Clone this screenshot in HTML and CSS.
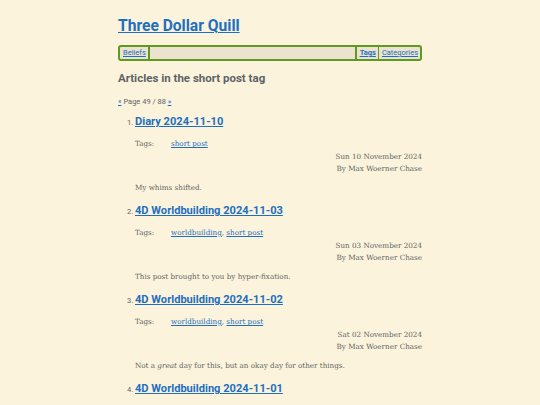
FILE: index.html
```html
<!DOCTYPE html>
<html lang="en">
<head>
<meta charset="utf-8">
<title>Three Dollar Quill</title>
<link rel="stylesheet" href="styles.css">
</head>
<body>
<div class="page">
  <header class="site-header">
    <h1 class="site-title"><a href="#">Three Dollar Quill</a></h1>
    <nav class="nav">
      <a href="#" class="nav-link">Beliefs</a>
      <span class="nav-fill"></span>
      <a href="#" class="nav-link nav-current">Tags</a>
      <a href="#" class="nav-link">Categories</a>
    </nav>
  </header>
  <main>
    <h2 class="section-title">Articles in the short post tag</h2>
    <p class="pager"><a href="#">«</a> Page 49 / 88 <a href="#">»</a></p>
    <ol class="articles" start="1">
      <li class="article">
        <h3 class="article-title"><a href="#">Diary 2024-11-10</a></h3>
        <div class="tags"><span class="tags-label">Tags:</span><span class="tags-list"><a href="#">short post</a></span></div>
        <div class="meta"><div>Sun 10 November 2024</div><div>By Max Woerner Chase</div></div>
        <p class="summary">My whims shifted.</p>
      </li>
      <li class="article">
        <h3 class="article-title"><a href="#">4D Worldbuilding 2024-11-03</a></h3>
        <div class="tags"><span class="tags-label">Tags:</span><span class="tags-list"><a href="#">worldbuilding</a>, <a href="#">short post</a></span></div>
        <div class="meta"><div>Sun 03 November 2024</div><div>By Max Woerner Chase</div></div>
        <p class="summary">This post brought to you by hyper-fixation.</p>
      </li>
      <li class="article">
        <h3 class="article-title"><a href="#">4D Worldbuilding 2024-11-02</a></h3>
        <div class="tags"><span class="tags-label">Tags:</span><span class="tags-list"><a href="#">worldbuilding</a>, <a href="#">short post</a></span></div>
        <div class="meta"><div>Sat 02 November 2024</div><div>By Max Woerner Chase</div></div>
        <p class="summary">Not a <em>great</em> day for this, but an okay day for other things.</p>
      </li>
      <li class="article">
        <h3 class="article-title"><a href="#">4D Worldbuilding 2024-11-01</a></h3>
        <div class="tags"><span class="tags-label">Tags:</span><span class="tags-list"><a href="#">worldbuilding</a>, <a href="#">short post</a></span></div>
        <div class="meta"><div>Fri 01 November 2024</div><div>By Max Woerner Chase</div></div>
        <p class="summary">Another day.</p>
      </li>
    </ol>
  </main>
</div>
</body>
</html>
```

FILE: styles.css
```css
html, body {
  margin: 0;
  padding: 0;
  background: #fbf3dc;
}
body {
  font-family: "DejaVu Serif", "Liberation Serif", serif;
  color: #626462;
  font-size: 8px;
}
a {
  color: #1f6fc0;
}
.page {
  width: 304px;
  margin: 0 auto;
  padding-top: 15px;
}
.site-title {
  font-family: Roboto, "Open Sans", "Liberation Sans", sans-serif;
  font-size: 15.6px;
  font-weight: 700;
  margin: 0 0 8px 0;
  line-height: 22px;
}
.nav {
  display: flex;
  align-items: stretch;
  border: 2px solid #5f9a1e;
  border-radius: 3px;
  background: #ebe3cf;
  height: 12px;
  font-family: Roboto, "Open Sans", "Liberation Sans", sans-serif;
  font-size: 7.5px;
  line-height: 12px;
}
.nav-link {
  padding: 0 2px 0 3px;
}
.nav-fill {
  flex: 1;
  border-left: 2px solid #5f9a1e;
  border-right: 2px solid #5f9a1e;
}
.nav-current {
  font-weight: 700;
  border-right: 1px solid #5f9a1e;
}
.section-title {
  font-family: Roboto, "Open Sans", "Liberation Sans", sans-serif;
  font-size: 11.5px;
  font-weight: 700;
  color: #5d6466;
  margin: 8px 0 0 0;
  line-height: 18px;
}
.pager {
  font-family: Roboto, "Open Sans", "Liberation Sans", sans-serif;
  font-size: 7.5px;
  margin: 9px 0 0 0;
  line-height: 12px;
}
.articles {
  margin: 5px 0 0 0;
  padding-left: 17px;
  font-size: 7.2px;
}
.articles li::marker {
  font-family: Roboto, "Open Sans", sans-serif;
  font-size: 7.5px;
}
.article {
  height: 89px;
}
.article-title {
  font-family: Roboto, "Open Sans", "Liberation Sans", sans-serif;
  font-size: 11.1px;
  font-weight: 700;
  margin: 0;
  line-height: 18px;
  display: inline;
}
.tags {
  display: flex;
  margin-top: 7px;
  line-height: 12px;
}
.tags-label {
  width: 36px;
}
.meta {
  text-align: right;
  line-height: 12px;
  margin-top: 1px;
}
.summary {
  margin: 7px 0 0 0;
  line-height: 12px;
}
```
